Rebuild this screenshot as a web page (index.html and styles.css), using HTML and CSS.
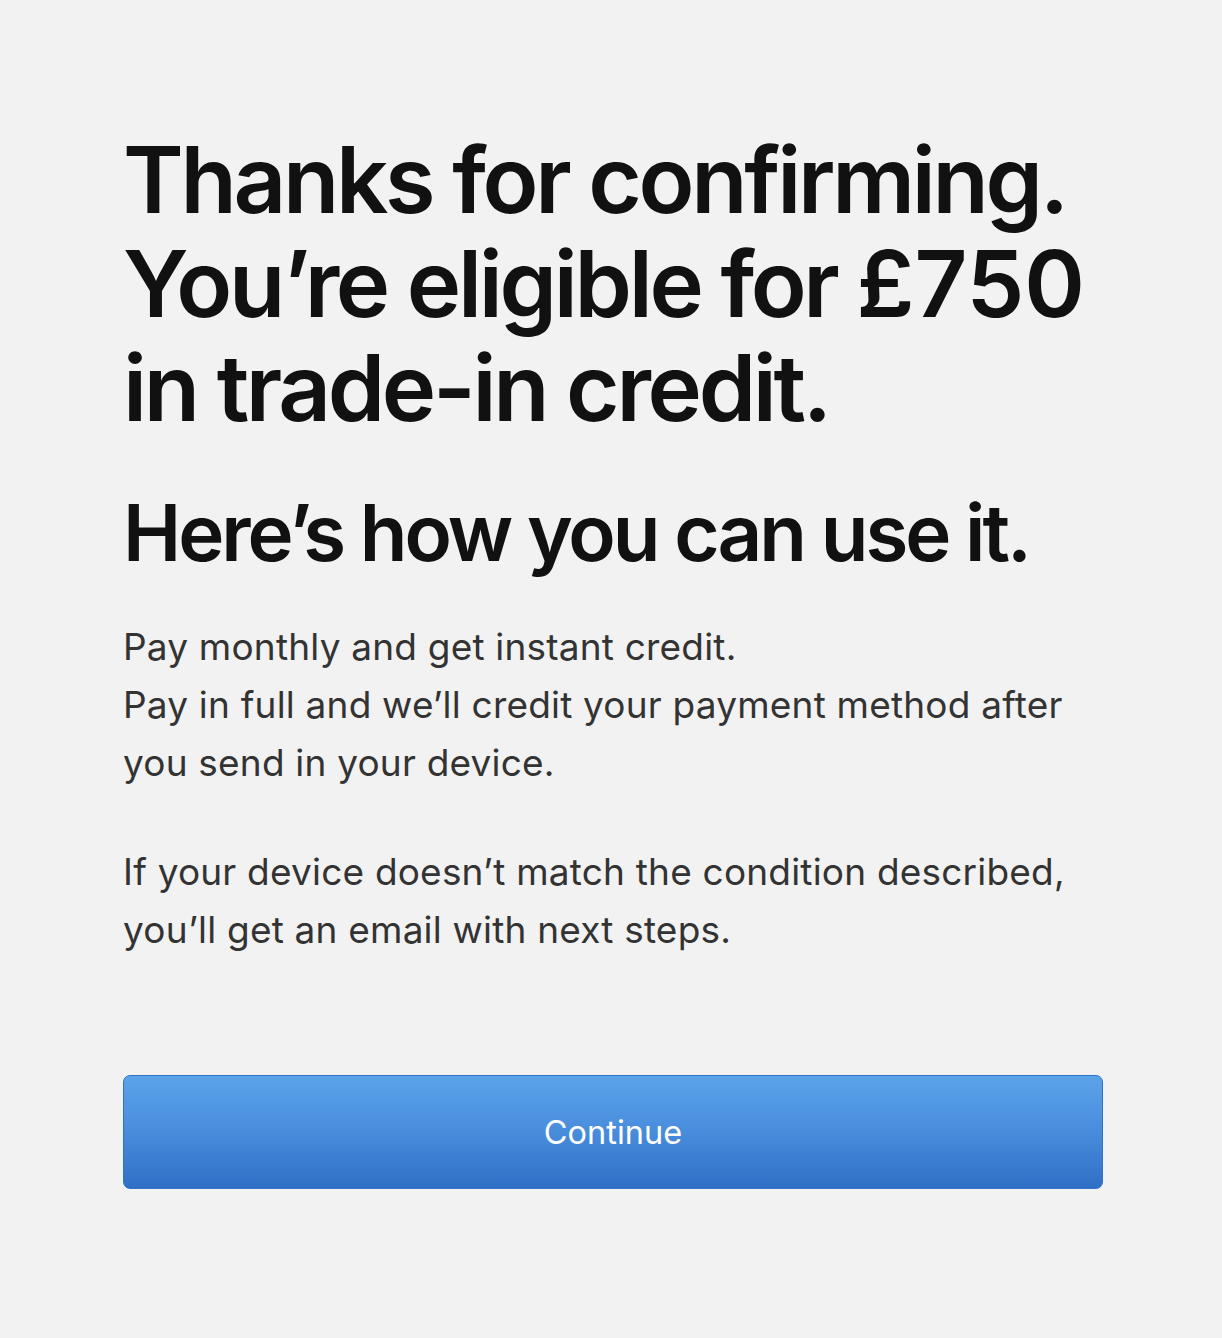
FILE: index.html
```html
<!DOCTYPE html>
<html lang="en">
<head>
<meta charset="utf-8">
<title>Trade-in credit</title>
<link rel="stylesheet" href="styles.css">
</head>
<body>
<main class="page">
  <h1 class="headline"><span class="line">Thanks for confirming.</span><span class="line">You’re eligible for <span class="amount">£750</span></span><span class="line">in trade-in credit.</span></h1>
  <h2 class="subhead">Here’s how you can use it.</h2>
  <p class="body-text">Pay monthly and get instant credit.<br>Pay in full and we’ll credit your payment method after you send in your device.</p>
  <p class="body-text">If your device doesn’t match the condition described, you’ll get an email with next steps.</p>
  <button class="continue-btn" type="button">Continue</button>
</main>
</body>
</html>
```
FILE: styles.css
```css
html, body {
  margin: 0;
  padding: 0;
  background: #f2f2f2;
}
body {
  font-family: Inter, "Noto Sans", "Liberation Sans", sans-serif;
  -webkit-font-smoothing: antialiased;
}
.page {
  width: 980px;
  margin-left: 123px;
  padding-top: 128px;
  display: flex;
  flex-direction: column;
}
.headline {
  margin: 0;
  font-size: 92px;
  line-height: 104px;
  font-weight: 600;
  letter-spacing: -3.3px;
  color: #111;
}
.headline .line {
  display: block;
  white-space: nowrap;
}
.headline .amount {
  letter-spacing: 0;
}
.subhead {
  margin: 48px 0 0;
  font-size: 78px;
  line-height: 90px;
  font-weight: 600;
  letter-spacing: -3.0px;
  color: #111;
  white-space: nowrap;
}
.body-text {
  margin: 40px 0 0;
  font-size: 37px;
  line-height: 58px;
  font-weight: 400;
  letter-spacing: 0.2px;
  color: #333;
}
.body-text + .body-text {
  margin-top: 51px;
}
.continue-btn {
  margin-top: 116px;
  height: 114px;
  width: 980px;
  border: 1px solid #2f74c8;
  border-radius: 7px;
  background: linear-gradient(to bottom, #5ba3e9 0%, #4a8fde 45%, #2f70c6 100%);
  color: #fff;
  font-family: Inter, "Noto Sans", sans-serif;
  font-size: 32.5px;
  font-weight: 400;
  padding: 0;
  cursor: pointer;
}
```
